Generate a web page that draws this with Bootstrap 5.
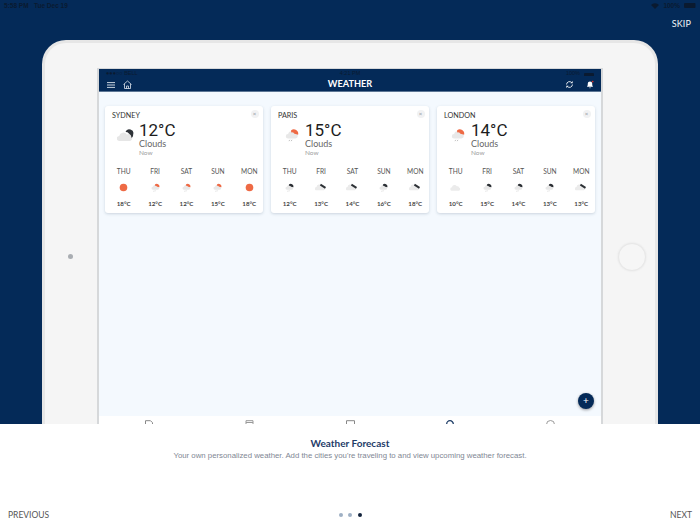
<!DOCTYPE html>
<html lang="en">
<head>
  <meta charset="UTF-8">
  <title>Weather Forecast</title>
  <link href="https://cdn.jsdelivr.net/npm/bootstrap@5.3.3/dist/css/bootstrap.min.css" rel="stylesheet">
  <style>
    html, body { height: 525px; overflow: hidden; }
    body { font-family: "Lato", "Liberation Sans", sans-serif; background: #fff; }
    .hero { height: 424px; background: #042a58; overflow: hidden; position: relative; }
    .ios-status { height: 11px; padding: 0 4px; font-size: 6.5px; line-height: 11px; color: #0a1a30; font-family: "Liberation Sans", sans-serif; font-weight: 700; }
    .skip-row { height: 29px; padding: 4px 9px 0 0; font-size: 9px; line-height: 17px; color: #f2f5f8; letter-spacing: .1px; }
    .tablet { height: 420px; margin: 0 42px; padding: 25px 52px 0; background: #f5f5f5; border: solid #e6e6e6; border-width: 3px 3px 0; border-radius: 24px 24px 0 0; position: relative; }
    .cam-dot { position: absolute; left: 23px; top: 211px; width: 5px; height: 5px; border-radius: 50%; background: #a9adb2; }
    .home-btn { position: absolute; left: 573px; top: 200px; width: 28px; height: 28px; border-radius: 50%; border: 1px solid #e8e8e8; box-shadow: 0 0 2px #e2e2e2; background: #f6f6f6; }
    .screen { height: 395px; background: #f4f9fe; border: solid #d6d8da; border-width: 1.5px 2px 0; position: relative; }
    .app-status { height: 7px; font-size: 5.5px; line-height: 9px; padding: 0 7px; background: #042a58; color: #0a1a30; font-family: "Liberation Sans", sans-serif; position: relative; }
    .app-clock { left: 0; right: 0; text-align: center; }
    .app-bar { height: 16px; padding: 2px 7px 0 8px; background: #042a58; color: #fff; border-bottom: 1px solid #5d7795; }
    .app-title { left: 0; right: 0; top: 1px; text-align: center; font-size: 9.2px; line-height: 14px; font-weight: 700; }
    .city-list { padding: 14px 6px 0; gap: 8.5px; height: 324px; }
    .city-card { width: 157.5px; height: 107px; flex: none; background: #fff; border-radius: 3px; box-shadow: 0 1px 3px rgba(60,80,110,.22); padding: 5px 7px; position: relative; }
    .city-name { font-size: 7.2px; line-height: 9px; color: #333; }
    .close-x { position: absolute; right: 4px; top: 4px; width: 8px; height: 8px; border-radius: 50%; background: #f1f2f3; color: #8a8f96; font-size: 6px; line-height: 8px; text-align: center; }
    .now-row { height: 38px; }
    .now-icon { width: 27px; }
    .now-temp { font-size: 17px; line-height: 18px; margin-top: 1px; color: #1c1c1c; font-family: "Roboto", "Lato", sans-serif; }
    .now-desc { font-size: 9px; line-height: 9px; color: #666; }
    .now-when { font-size: 6.5px; line-height: 9px; color: #a1a1a1; }
    .days { margin: 8px -8px 0 -4px; }
    .day-col { width: 31.4px; flex: none; text-align: center; }
    .day-name { font-size: 6.6px; line-height: 10px; color: #555; }
    .day-icon { height: 22px; }
    .day-temp { font-size: 6.2px; line-height: 9px; color: #444; font-weight: 700; margin-top: 1px; }
    .tab-strip { height: 12px; background: #fff; overflow: hidden; padding: 4px 0 0; position: relative; }
    .tab-glyph { width: 101px; }
    .fab { position: absolute; right: 7px; top: 324px; width: 16px; height: 16px; border-radius: 50%; background: #042a58; color: #fff; font-size: 10px; line-height: 15px; text-align: center; box-shadow: 0 1px 3px rgba(0,0,0,.4); }
    .intro { height: 101px; padding-top: 13px; text-align: center; position: relative; }
    .intro-title { font-size: 10px; line-height: 13px; font-weight: 700; color: #1e3b68; }
    .intro-text { font-size: 7.8px; line-height: 12px; color: #7f8794; font-family: "Liberation Sans", sans-serif; }
    .foot-row { position: absolute; left: 8px; right: 8px; bottom: 4px; height: 12px; font-size: 8.5px; line-height: 14px; color: #555; }
    .foot-side { flex: 1 1 0; }
    .pager-dot { width: 4px; height: 4px; border-radius: 50%; background: #9fb0c4; }
    .pager-dot.on { background: #12233c; }
    .pager { gap: 5.5px; }
  </style>
</head>
<body>
<svg width="0" height="0" class="d-block">
  <defs>
    <symbol id="cloud" viewBox="0 0 20 12"><path d="M4 12a3.200 3.200 0 0 1-.5-6.400A4.800 4.800 0 0 1 12.400 3.800 3.200 3.200 0 0 1 16.400 6.200 3 3 0 0 1 16 12Z" fill="#ebebeb"/></symbol>
    <symbol id="rain-red" viewBox="0 0 16 16"><path d="M3.500 12a2.600 2.600 0 0 1 0-5.200 4 4 0 0 1 7.400-1 2.800 2.800 0 0 1 1 6.200Z" fill="#e8e8e8"/><path d="M7 2.700a5 5 0 0 1 8 5L10.800 6.500A4 4 0 0 0 7 5Z" fill="#ee6a45"/><path d="M5.500 13.500l-1 1.500M8 13.500l-1 1.500" stroke="#b0b0b0" stroke-width=".9"/></symbol>
    <symbol id="rain-dark" viewBox="0 0 16 16"><path d="M3.500 12a2.600 2.600 0 0 1 0-5.200 4 4 0 0 1 7.400-1 2.800 2.800 0 0 1 1 6.200Z" fill="#e8e8e8"/><path d="M7 2.700a5 5 0 0 1 8 5L10.800 6.500A4 4 0 0 0 7 5Z" fill="#2c3035"/><path d="M5.500 13.500l-1 1.500M8 13.500l-1 1.500" stroke="#b0b0b0" stroke-width=".9"/></symbol>
    <symbol id="wide-dark" viewBox="0 0 20 12"><path d="M2.500 11.500a2.700 2.700 0 0 1 0-5.400 4.600 4.600 0 0 1 8.700-1.600 3.400 3.400 0 0 1 4 2.800 2.200 2.200 0 0 1-.7 4.200Z" fill="#ebebeb"/><path d="M9 2l8.500 5.500" stroke="#2c3035" stroke-width="3.200"/></symbol>
    <symbol id="cloud-moon" viewBox="0 0 20 14"><path d="M3 13.500a3 3 0 0 1-.4-6A5 5 0 0 1 11.600 5.800 3.400 3.400 0 0 1 15.500 13.500Z" fill="#e6e6e6"/><path d="M10 3a4.500 4.500 0 0 1 9 2.800 4.600 4.600 0 0 1-2 4.200 5.500 5.500 0 0 0-3-5.400A5 5 0 0 0 10 3Z" fill="#2f3338"/></symbol>
    <symbol id="sync" viewBox="0 0 16 16"><path d="M2.800 8a5.200 5.200 0 0 1 9-3.500M13.200 8a5.200 5.200 0 0 1-9 3.500" fill="none" stroke="#fff" stroke-width="1.500"/><path d="M13.600 1.800v4h-4ZM2.400 14.200v-4h4Z" fill="#fff"/></symbol>
  </defs>
</svg>

<div class="hero">
  <div class="ios-status d-flex justify-content-between">
    <span>5:58 PM &nbsp; Tue Dec 19</span>
    <span class="d-flex align-items-center gap-1">
      <svg width="8" height="6" viewBox="0 0 8 6"><path d="M0 2a5.500 5.500 0 0 1 8 0L4 6Z" fill="#0a1a30"/></svg>100%
      <svg width="12" height="5" viewBox="0 0 12 5"><rect width="11.500" height="5" rx="1" fill="#0a1a30"/></svg>
    </span>
  </div>
  <div class="skip-row text-end">SKIP</div>
  <div class="tablet">
    <span class="cam-dot"></span>
    <span class="home-btn"></span>
    <div class="screen">
      <div class="app-status d-flex justify-content-between">
        <span>●●●○○ BELL</span>
        <span class="app-clock position-absolute">4:21 PM</span>
        <span class="d-flex align-items-start gap-1">100%<svg class="mt-1" width="10" height="4" viewBox="0 0 10 4"><rect width="10" height="4" rx="1" fill="#0a1a30"/></svg></span>
      </div>
      <div class="app-bar d-flex justify-content-between align-items-center position-relative">
        <div class="d-flex align-items-center gap-2">
          <svg width="8" height="6" viewBox="0 0 8 6"><path d="M0 .6h8M0 3h8M0 5.400h8" stroke="#dfe6ee" stroke-width=".9"/></svg>
          <svg width="9" height="9" viewBox="0 0 9 9"><path d="M.5 4.500 4.500 1l4 3.500M1.500 4v4.500h6V4M3.500 8.500V6h2v2.500" fill="none" stroke="#dfe6ee" stroke-width=".8"/></svg>
        </div>
        <div class="app-title position-absolute">WEATHER</div>
        <div class="d-flex align-items-center gap-2">
          <svg width="9" height="9"><use href="#sync"/></svg>
          <svg width="8" height="9" class="ms-1" viewBox="0 0 9 9"><path d="M1 7c1-1 1-2 1-3.500a2.500 2.500 0 0 1 5 0C7 5 7 6 8 7ZM3.500 7.800h2L4.500 9Z" fill="#fff"/><circle cx="7.500" cy="1.200" r="1" fill="#d9342b"/></svg>
        </div>
      </div>
      <div class="city-list d-flex" id="cities"></div>
      <div class="fab">+</div>
      <div class="tab-strip d-flex justify-content-center">
        <div class="tab-glyph d-flex justify-content-center"><svg width="8" height="8" viewBox="0 0 8 8"><path d="M.5 8V.7h5l2 2V8" fill="none" stroke="#888"/></svg></div>
        <div class="tab-glyph d-flex justify-content-center"><svg width="9" height="8" viewBox="0 0 9 8"><path d="M1 8V.7h7V8M1 2.500h7" fill="none" stroke="#999"/></svg></div>
        <div class="tab-glyph d-flex justify-content-center"><svg width="9" height="8" viewBox="0 0 9 8"><path d="M.5 8V.7h8V8" fill="none" stroke="#888"/></svg></div>
        <div class="tab-glyph d-flex justify-content-center"><svg width="8" height="8" viewBox="0 0 8 8"><path d="M.7 4a3.300 3.300 0 0 1 6.600 0" fill="none" stroke="#1d3c66" stroke-width="1.300"/></svg></div>
        <div class="tab-glyph d-flex justify-content-center"><svg width="9" height="8" viewBox="0 0 9 8"><path d="M.5 4.500a4 4 0 0 1 8 0" fill="none" stroke="#999"/></svg></div>
      </div>
    </div>
  </div>
</div>

<div class="intro">
  <div class="intro-title">Weather Forecast</div>
  <div class="intro-text">Your own personalized weather. Add the cities you're traveling to and view upcoming weather forecast.</div>
  <div class="foot-row d-flex align-items-center">
    <span class="foot-side text-start">PREVIOUS</span>
    <span class="pager d-flex align-items-center">
      <span class="pager-dot"></span><span class="pager-dot"></span><span class="pager-dot on"></span>
    </span>
    <span class="foot-side text-end">NEXT</span>
  </div>
</div>

<script>
  const days = ["THU", "FRI", "SAT", "SUN", "MON"];
  const cities = [
    { name: "SYDNEY", temp: "12", big: "cloud-moon", icons: ["sun", "rain-red", "rain-red", "rain-red", "sun"], temps: [18, 12, 12, 15, 18] },
    { name: "PARIS", temp: "15", big: "rain-red", icons: ["rain-dark", "wide-dark", "wide-dark", "rain-dark", "wide-dark"], temps: [12, 13, 14, 16, 18] },
    { name: "LONDON", temp: "14", big: "rain-red", icons: ["cloud", "rain-dark", "rain-dark", "rain-dark", "wide-dark"], temps: [10, 15, 14, 13, 13] }
  ];
  const smallSize = { "rain-red": 9, "rain-dark": 9, "wide-dark": 12, "cloud": 11 };
  function icon(id, size) {
    if (id === "sun") return '<svg width="9" height="9"><circle cx="4.500" cy="4.500" r="3.800" fill="#ee6a45"/></svg>';
    return `<svg width="${size}" height="${size}"><use href="#${id}"/></svg>`;
  }
  document.getElementById("cities").innerHTML = cities.map(c => `
    <div class="city-card">
      <div class="city-name">${c.name}</div>
      <span class="close-x">×</span>
      <div class="now-row d-flex">
        <div class="now-icon d-flex align-items-center justify-content-center pb-2">${icon(c.big, c.big === "cloud-moon" ? 17 : 14)}</div>
        <div>
          <div class="now-temp">${c.temp}°C</div>
          <div class="now-desc">Clouds</div>
          <div class="now-when">Now</div>
        </div>
      </div>
      <div class="days d-flex">
        ${days.map((d, i) => `
          <div class="day-col">
            <div class="day-name">${d}</div>
            <div class="day-icon d-flex align-items-center justify-content-center">${icon(c.icons[i], smallSize[c.icons[i]])}</div>
            <div class="day-temp">${c.temps[i]}°C</div>
          </div>`).join("")}
      </div>
    </div>`).join("");
</script>
<script src="https://cdn.jsdelivr.net/npm/bootstrap@5.3.3/dist/js/bootstrap.bundle.min.js"></script>
</body>
</html>
